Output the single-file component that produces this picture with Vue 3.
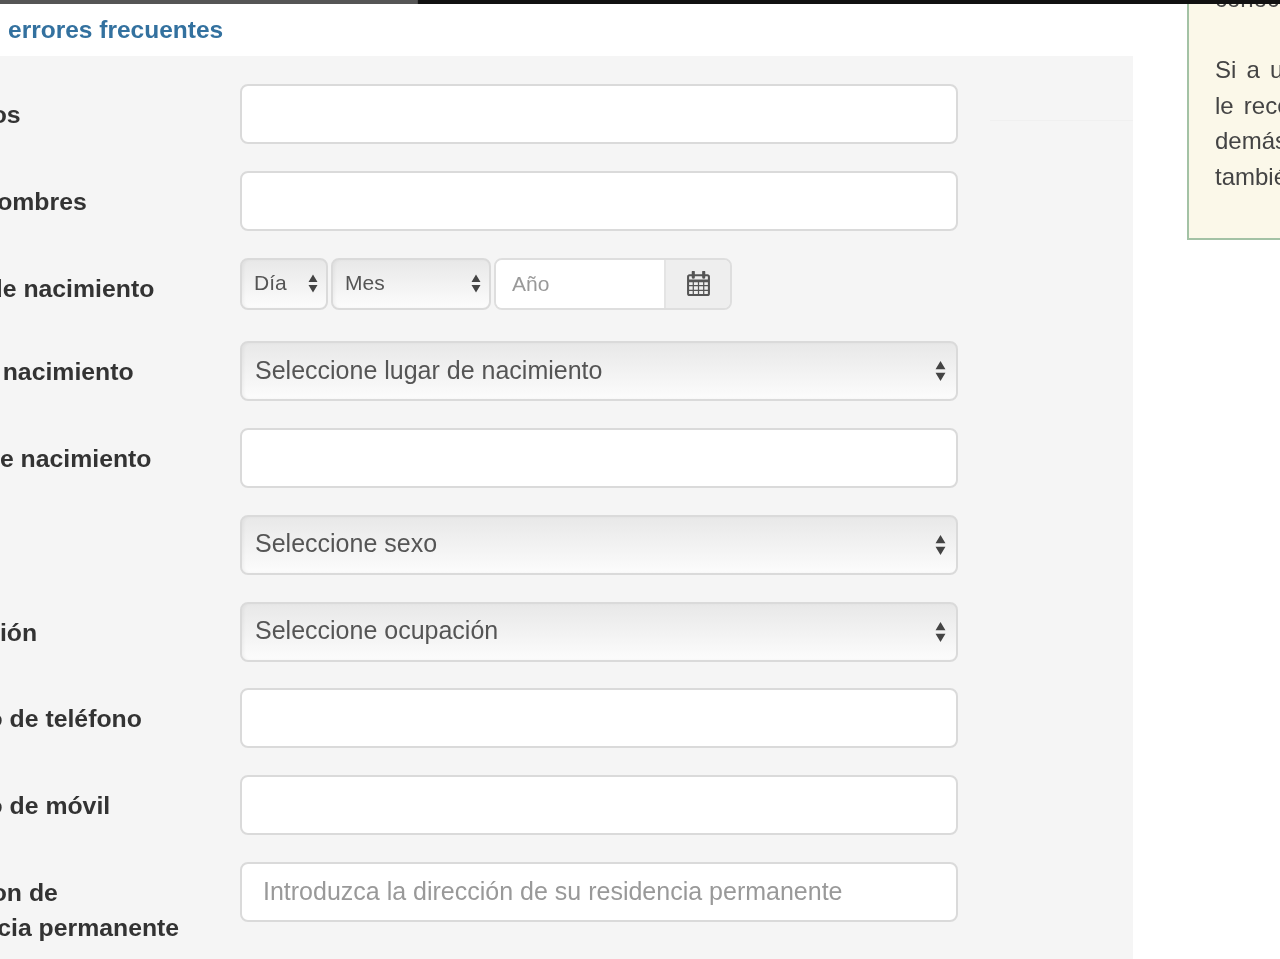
<template>
  <div class="page">
    <div class="top-bar"></div>

    <main class="main">
      <a class="errors-link" href="#">errores frecuentes</a>

      <form class="well" @submit.prevent>
        <span class="well-line"></span>

        <template v-for="row in rows" :key="row.label">
          <div class="form-row" :class="{ 'date-row': row.type === 'date' }">
            <label class="row-label">{{ row.label }}</label>

            <div v-if="row.type === 'date'" class="date-group">
              <div class="select-wrap day">
                <select class="control select"><option>Día</option></select>
                <svg class="arrows" viewBox="0 0 10 20"><path d="M5 1 9.5 8.5H.5zM5 19 .5 11.5h9z" /></svg>
              </div>
              <div class="select-wrap month">
                <select class="control select"><option>Mes</option></select>
                <svg class="arrows" viewBox="0 0 10 20"><path d="M5 1 9.5 8.5H.5zM5 19 .5 11.5h9z" /></svg>
              </div>
              <div class="date-input">
                <input class="year" type="text" placeholder="Año" />
                <span class="addon">
                  <svg class="calendar" viewBox="0 0 24 24" fill="none" stroke="currentColor">
                    <rect x="2" y="4" width="20" height="19" rx="1.5" stroke-width="2" />
                    <path d="M2 9.5h20" stroke-width="2.5" />
                    <path d="M2 14h20M2 18.5h20M7 9.5V23M12 9.5V23M17 9.5V23" stroke-width="1.2" />
                    <path d="M7 1v5M17 1v5" stroke-width="3" stroke-linecap="round" />
                  </svg>
                </span>
              </div>
            </div>

            <div v-else-if="row.type === 'select'" class="select-wrap">
              <select class="control select"><option>{{ row.value }}</option></select>
              <svg class="arrows" viewBox="0 0 10 20"><path d="M5 1 9.5 8.5H.5zM5 19 .5 11.5h9z" /></svg>
            </div>

            <input v-else class="control" type="text" :placeholder="row.placeholder" />
          </div>
        </template>
      </form>
    </main>

    <aside class="note">
      <p>conocer</p>
      <p>Si a usted no se le ha</p>
      <p>le recomendamos que</p>
      <p>demás</p>
      <p>también</p>
    </aside>
  </div>
</template>

<script setup>
const rows = [
  { label: 'Apellidos' },
  { label: 'Otros nombres' },
  { label: 'Fecha de nacimiento', type: 'date' },
  { label: 'País de nacimiento', type: 'select', value: 'Seleccione lugar de nacimiento' },
  { label: 'Lugar de nacimiento' },
  { label: 'Sexo', type: 'select', value: 'Seleccione sexo' },
  { label: 'Ocupación', type: 'select', value: 'Seleccione ocupación' },
  { label: 'Número de teléfono' },
  { label: 'Número de móvil' },
  {
    label: 'Direccion de residencia permanente',
    placeholder: 'Introduzca la dirección de su residencia permanente',
  },
]
</script>

<style>
html,
body {
  margin: 0;
  background: #fff;
}
</style>

<style scoped>
.page {
  position: relative;
  display: flex;
  align-items: flex-start;
  width: 1280px;
  height: 959px;
  overflow: hidden;
  background: #fff;
  color: #333;
  font-family: "Liberation Sans", Arial, sans-serif;
  font-size: 24px;
  line-height: 35.5px;
  filter: blur(0.7px);
}

.top-bar {
  position: absolute;
  top: 0;
  left: 0;
  right: 0;
  height: 4px;
  background: linear-gradient(90deg, #555 0, #555 32.6%, #111 32.7%);
  z-index: 2;
}

.main {
  flex: none;
  width: 1224px;
  margin-left: -91px;
}

.errors-link {
  display: block;
  height: 56px;
  padding-left: 99px;
  padding-top: 12px;
  box-sizing: border-box;
  color: #33719f;
  font-size: 24.5px;
  font-weight: 700;
  text-decoration: none;
}

.well {
  position: relative;
  height: 903px;
  padding-top: 28px;
  box-sizing: border-box;
  background: #f5f5f5;
}

.well-line {
  position: absolute;
  top: 64px;
  right: 0;
  width: 143px;
  height: 1px;
  background: #f0f0f0;
}

.form-row {
  display: grid;
  grid-template-columns: 331px 718px;
  margin-bottom: 26.8px;
}

.date-row {
  height: 56.8px;
}

.row-label {
  width: 276px;
  padding-top: 13px;
  color: #333;
  font-size: 24.8px;
  font-weight: 700;
}

.control {
  display: block;
  width: 100%;
  height: 60px;
  margin: 0;
  padding: 0 21px;
  box-sizing: border-box;
  border: 2px solid #dadada;
  border-radius: 8px;
  background: #fff;
  color: #555;
  font-family: inherit;
  font-size: 25px;
  outline: none;
}

.control::placeholder,
.year::placeholder {
  color: #999;
  opacity: 1;
}

.select {
  padding: 0 40px 3px 13px;
  appearance: none;
  background: linear-gradient(#e8e8e8, #f3f3f3 55%, #fcfcfc);
  box-shadow: inset 2px 0 3px rgba(0, 0, 0, 0.04);
}

.select-wrap {
  position: relative;
}

.arrows {
  position: absolute;
  top: 50%;
  right: 12px;
  width: 11px;
  height: 24px;
  margin-top: -12px;
  fill: #444;
  pointer-events: none;
}

.date-group {
  display: flex;
  align-items: flex-start;
  gap: 3px;
  height: 52px;
}

.date-group .control {
  height: 52px;
  padding-right: 20px;
  padding-left: 12px;
  font-size: 21px;
}

.day {
  width: 88px;
}

.month {
  width: 160px;
}

.day .arrows,
.month .arrows {
  right: 10px;
  width: 10px;
  height: 21px;
  margin-top: -11px;
}

.date-input {
  display: flex;
  width: 238px;
  height: 52px;
  box-sizing: border-box;
  border: 2px solid #dedede;
  border-radius: 8px;
  overflow: hidden;
}

.year {
  flex: 1;
  min-width: 0;
  padding: 0 16px;
  border: 0;
  background: #fff;
  color: #555;
  font-family: inherit;
  font-size: 21px;
  outline: none;
}

.addon {
  display: flex;
  flex: none;
  align-items: center;
  justify-content: center;
  width: 66px;
  border-left: 2px solid #e4e4e4;
  box-sizing: border-box;
  background: #eee;
  color: #555;
}

.calendar {
  width: 25px;
  height: 25px;
}

.note {
  flex: none;
  width: 340px;
  margin-top: -30px;
  margin-left: 54px;
  padding: 9px 0 44px 26px;
  box-sizing: border-box;
  border: 2px solid #a3c2a5;
  background: #fbf8e9;
  color: #444;
  word-spacing: 3.5px;
  white-space: nowrap;
}

.note p {
  margin: 0;
}

.note p:first-child {
  margin-bottom: 35.5px;
}
</style>
